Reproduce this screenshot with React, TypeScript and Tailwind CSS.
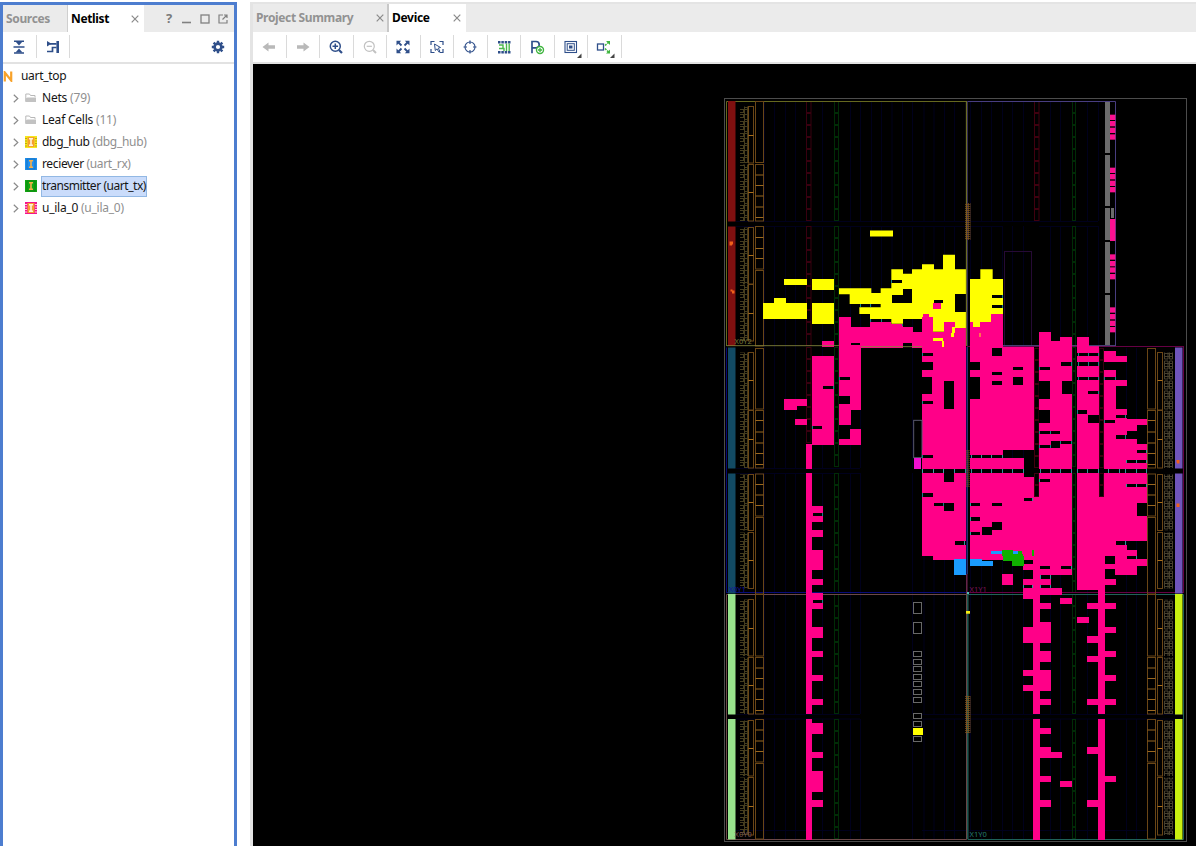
import React from "react";

type Box = [number, number, number, number];

const PINK = "#ff0088";
const YELLOW = "#ffff00";
const NAVY = "#2f4f8a";

/* Boxes are [left, top, right, bottom] in third-of-a-pixel units inside a tile. */
function Boxes({ list, fill }: { list: Box[]; fill: string }) {
  return (
    <g fill={fill} shapeRendering="crispEdges">
      {list.map((b, i) => (
        <rect key={i} x={b[0]} y={b[1]} width={b[2] - b[0]} height={b[3] - b[1]} />
      ))}
    </g>
  );
}

function Frames({ list, stroke }: { list: Box[]; stroke: string }) {
  return (
    <>
      {list.map((b, i) => (
        <rect key={i} x={b[0]} y={b[1]} width={b[2] - b[0]} height={b[3] - b[1]} fill="none" stroke={stroke} strokeWidth={1} />
      ))}
    </>
  );
}

function Tile({ x, y, children }: { x: number; y: number; children: React.ReactNode }) {
  return <g transform={`translate(${x} ${y}) scale(0.333333)`}>{children}</g>;
}

const edges = (boxes: Box[]): Box[] => boxes.map(([, y1, x2, y2]) => [x2 - 2, y1, x2 + 1, y2]);

const y5: Box[] = [[192, 56, 260, 76], [275, 56, 342, 90], [162, 114, 198, 130], [130, 128, 260, 177], [275, 128, 342, 191]];
const h5y: Box[] = [[516, 61, 546, 70], [549, 88, 576, 128], [516, 104, 576, 128], [642, 119, 669, 128], [705, 103, 738, 157]];
const p5: Box[] = [
  [639, 128, 663, 147], [357, 172, 393, 496], [393, 200, 450, 263], [450, 187, 514, 263], [514, 191, 549, 263],
  [549, 200, 580, 248], [576, 215, 606, 263], [393, 256, 423, 450], [389, 507, 423, 555], [357, 538, 423, 555],
  [306, 243, 342, 262], [275, 288, 342, 555], [192, 418, 260, 437], [192, 418, 230, 450], [225, 477, 260, 496],
  [258, 552, 276, 602], [606, 172, 638, 602], [610, 163, 627, 174], [638, 215, 673, 602], [672, 187, 705, 602], [705, 205, 738, 602],
];
const h5: Box[] = [
  [393, 248, 420, 256], [359, 350, 389, 359], [357, 407, 389, 432], [310, 379, 340, 388], [275, 498, 306, 507],
  [606, 278, 638, 287], [606, 306, 638, 330], [606, 350, 636, 402], [673, 364, 701, 446], [606, 423, 638, 432], [606, 585, 638, 594],
];
const c5: Box[] = [
  [514, 61, 517, 70], [419, 132, 422, 142], [450, 132, 453, 142], [450, 177, 453, 186], [482, 177, 485, 186], [545, 191, 548, 199],
  [358, 350, 361, 359], [339, 379, 342, 388], [275, 498, 278, 507], [606, 278, 609, 287], [606, 423, 609, 432], [606, 585, 609, 594],
];
const p6: Box[] = [
  [60, 187, 124, 260], [123, 163, 159, 262], [60, 260, 252, 570], [60, 568, 159, 584], [60, 594, 222, 602],
  [267, 215, 303, 602], [303, 243, 330, 602], [330, 230, 366, 602], [381, 230, 417, 602], [417, 259, 447, 602],
  [461, 273, 498, 306], [498, 287, 530, 306], [461, 330, 498, 602], [498, 359, 530, 379], [498, 447, 530, 602], [530, 477, 592, 602],
];
const h6: Box[] = [
  [127, 263, 155, 287], [60, 306, 91, 330], [127, 336, 155, 345], [190, 322, 218, 330], [190, 350, 218, 374], [127, 364, 155, 374],
  [60, 350, 91, 417], [267, 322, 299, 330], [334, 306, 366, 317], [267, 364, 299, 417], [336, 364, 366, 402], [267, 450, 299, 489],
  [267, 513, 330, 521], [303, 542, 366, 551], [303, 551, 330, 565], [267, 556, 303, 565], [381, 278, 447, 287], [381, 306, 447, 317],
  [381, 350, 447, 359], [415, 394, 447, 402], [381, 450, 411, 461], [415, 465, 447, 489], [461, 350, 498, 359], [498, 465, 530, 475],
  [461, 481, 494, 489], [561, 496, 592, 552], [530, 513, 561, 537], [498, 526, 530, 537], [561, 570, 592, 580],
];
const c6: Box[] = [
  [156, 105, 159, 114], [156, 134, 159, 143], [268, 322, 271, 330], [362, 306, 365, 317], [300, 513, 303, 521], [268, 513, 271, 521],
  [331, 542, 334, 551], [362, 542, 365, 551], [268, 556, 271, 565], [300, 556, 303, 565], [383, 278, 386, 287], [413, 278, 416, 287],
  [444, 278, 447, 287], [383, 306, 386, 317], [413, 306, 416, 317], [444, 306, 447, 317], [383, 350, 386, 359], [413, 350, 416, 359],
  [444, 350, 447, 359], [444, 394, 447, 402], [382, 450, 385, 461], [463, 350, 466, 359], [494, 350, 497, 359], [526, 465, 529, 475],
  [463, 481, 466, 489], [526, 526, 529, 537], [588, 570, 591, 580], [62, 584, 65, 594], [93, 584, 96, 594], [124, 584, 127, 594], [155, 584, 158, 594],
];
const p7: Box[] = [
  [606, 0, 738, 58], [606, 68, 638, 318], [638, 68, 738, 331], [258, -3, 276, 56], [258, 68, 276, 602], [276, 168, 310, 215],
  [276, 240, 310, 260], [276, 300, 310, 361], [276, 387, 310, 404], [276, 430, 310, 476], [276, 531, 310, 563],
];
const h7: Box[] = [
  [606, 14, 638, 24], [673, 68, 701, 96], [606, 130, 638, 140], [642, 159, 673, 168], [673, 159, 701, 184], [705, 274, 738, 284],
  [278, 189, 310, 197], [278, 449, 310, 458],
];
const p8: Box[] = [
  [60, 0, 159, 14], [60, 24, 222, 58], [60, 68, 222, 331], [222, 81, 253, 347], [252, 141, 267, 376], [267, 0, 366, 58],
  [267, 68, 366, 376], [218, 343, 252, 361], [249, 343, 270, 602], [218, 386, 303, 404], [218, 415, 335, 435], [218, 415, 252, 447],
  [252, 459, 303, 477], [218, 531, 303, 578], [270, 516, 303, 533], [330, 444, 366, 462], [155, 372, 190, 404], [381, 0, 447, 58],
  [381, 68, 447, 419], [446, 141, 465, 419], [444, 400, 465, 602], [461, 0, 592, 58], [461, 68, 592, 273], [461, 272, 498, 376],
  [497, 284, 530, 376], [529, 300, 561, 376], [561, 328, 592, 347], [461, 386, 498, 404], [411, 459, 498, 477], [411, 559, 447, 578],
  [465, 531, 498, 549], [381, 502, 416, 520],
];
const h8: Box[] = [
  [222, 144, 249, 153], [60, 159, 91, 168], [127, 159, 155, 168], [60, 202, 91, 212], [127, 217, 155, 240], [96, 232, 127, 256],
  [60, 246, 91, 256], [267, 87, 299, 96], [270, 347, 299, 356], [334, 347, 366, 356], [222, 331, 249, 343], [466, 317, 494, 343],
  [466, 356, 494, 376], [530, 101, 592, 110], [561, 159, 592, 198], [530, 30, 592, 38], [561, 0, 592, 9], [530, 318, 561, 327],
];
const c8: Box[] = [
  ...[13, 44, 62, 93, 124, 155, 187, 218, 269, 300, 331, 362, 382, 412, 443, 475, 506, 526, 557, 588].map((x): Box => [x, 58, x + 3, 68]),
  ...[62, 93, 124, 155].map((x): Box => [x, 14, x + 3, 24]),
  [247, 144, 250, 153], [60, 159, 63, 168], [60, 202, 63, 212], [60, 246, 63, 256], [42, 274, 45, 284], [268, 87, 271, 96],
  [362, 347, 365, 356], [527, 30, 530, 38], [557, 30, 560, 38], [588, 30, 591, 38], [527, 101, 530, 110], [557, 101, 560, 110],
  [588, 101, 591, 110], [526, 274, 529, 284], [557, 318, 560, 327], [269, 376, 272, 386], [299, 376, 302, 386], [218, 404, 221, 414],
  [247, 404, 250, 414], [269, 404, 272, 414], [299, 404, 302, 414], [588, 0, 591, 8],
];
const p9: Box[] = [
  [258, 0, 276, 205], [258, 219, 276, 581], [276, 14, 310, 34], [276, 87, 310, 105], [276, 159, 310, 178], [276, 231, 310, 265],
  [276, 319, 310, 337], [276, 376, 310, 438], [276, 463, 310, 482],
];
const p10: Box[] = [
  [250, 0, 270, 205], [250, 219, 270, 581], [444, 0, 465, 205], [444, 219, 465, 581], [270, 14, 303, 47], [218, 72, 303, 90],
  [270, 88, 303, 134], [218, 116, 270, 134], [270, 159, 303, 178], [270, 246, 303, 265], [270, 304, 303, 337], [303, 318, 335, 337],
  [270, 391, 303, 409], [330, 405, 366, 424], [270, 463, 303, 482], [411, 30, 447, 47], [465, 14, 498, 34], [465, 87, 498, 105],
  [411, 159, 498, 178], [411, 304, 447, 323], [465, 391, 498, 409], [411, 463, 447, 482],
];

/* Vertical extents of the six clock-region halves. */
const halves: [number, number][] = [[101, 221.5], [226.5, 346], [347.5, 468.5], [473.5, 593.5], [594, 714.5], [719, 839.5]];
const barsLeft = ["#7f1010", "#7f1010", "#124a64", "#124a64", "#98e28c", "#98e28c"];
const barsRight = ["", "", "#6f55bb", "#6f55bb", "#c8f010", "#c8f010"];
const bankRows: [number, number, number][] = [
  [106.5, 163, 135.5], [164.5, 221, 192.5], [227.5, 284, 255.5], [284.5, 341, 313.5], [352.5, 410, 380.5], [410.5, 468, 439.5],
  [474.5, 530.5, 502.5], [532.5, 588.5, 560.5], [599.5, 656, 628.5], [657.5, 714, 685.5], [720.5, 776, 748.5], [777.5, 835, 806.5],
];
const ioRows: [number, number, number[]][] = [
  [101.5, 162.5, []], [164.5, 221, [175, 185.5, 196, 207, 217.5]], [226.5, 269, [237.5, 248.5, 258.5]], [270.5, 346, []],
  [348.5, 409, []], [410.5, 468, [420.5, 432, 443, 453.5, 464.5]], [474, 516, [484.5, 495, 505.5]], [517.5, 594, []],
  [594.5, 656, []], [657.5, 714, [668, 678.5, 689, 699.5, 710.5]], [719.5, 762, [730, 741, 751.5]], [763.5, 839, []],
];

function Banks({ right }: { right?: boolean }) {
  const from = right ? 347 : 0;
  const bx = right ? 1157.5 : 748.5;
  const cx = right ? 1147.5 : 755.5;
  return (
    <g fill="none" stroke="#6a4616">
      {bankRows.filter((r) => r[0] > from).map(([a, b, m]) => (
        <g key={a}>
          <rect x={bx} y={a} width={5} height={b - a} />
          <path d={`M${bx} ${m}h5`} stroke="#a86f1c" />
        </g>
      ))}
      {ioRows.filter((r) => r[0] > from).map(([a, b, ms]) => (
        <g key={a}>
          <rect x={cx} y={a} width={8} height={b - a} />
          {ms.map((m) => <path key={m} d={`M${cx} ${m}h8`} stroke="#9a6820" />)}
        </g>
      ))}
      {bankRows.filter((r) => r[0] > from).map(([a, b]) => (
        <rect key={`t${a}`} x={right ? 1164 : 740} y={a} width={right ? 9 : 8} height={b - a} fill={right ? "url(#padsR)" : "url(#padsL)"} stroke="none" />
      ))}
    </g>
  );
}

function Ladder({ x, w, color, list }: { x: number; w: number; color: string; list: [number, number][] }) {
  return (
    <g fill="none" stroke={color}>
      {list.map(([a, b]) =>
        Array.from({ length: Math.round((b - a) / 12) }, (_, i) => (
          <rect key={a + i} x={x} y={Math.floor(a) + 0.5 + i * 12} width={w} height={11} />
        ))
      )}
    </g>
  );
}

function DeviceMap() {
  const gridL = [764.5, 774.5, 785.5, 795.5, 822.5, 850.5, 860.5];
  const gridM = [871.5, 881.5, 892, 902.5];
  const gridR = [912.5, 924, 934, 944.5, 954.5, 970.5, 981.5, 991.5, 1002.5, 1012.5, 1023.5, 1050.5, 1060.5, 1087.5, 1098.5];
  return (
    <svg className="block h-[782px] w-[943px] shrink-0 bg-black" viewBox="253 64 943 782">
      <defs>
        <pattern id="padsL" width="8" height="12" patternUnits="userSpaceOnUse">
          <path d="M.5 0V12M3.500 0V12M0 1.500H8M3 4.500H8M0 6.500H8M3 9.500H8M0 11.500H4M7.500 1V5M7.500 6V10" stroke="#453d1e" strokeWidth="1" fill="none" />
        </pattern>
        <pattern id="padsR" width="9" height="10" x="1164" patternUnits="userSpaceOnUse">
          <path d="M.5 1V9H4V1ZM5.500 1V9H8.500V1ZM0 3.500H9M0 6.500H9" stroke="#48412e" strokeWidth="1" fill="none" />
        </pattern>
        <pattern id="mesh" width="2" height="2" patternUnits="userSpaceOnUse">
          <path d="M0 .5H2M.5 0V2" stroke="#80561e" strokeWidth=".7" />
        </pattern>
      </defs>

      <g stroke="#00001c">
        {gridL.map((x) => <path key={x} d={`M${x} 101V221M${x} 226V468M${x} 473V714M${x} 719V839`} />)}
        {gridM.map((x) => <path key={x} d={`M${x} 101V221M${x} 226V346`} />)}
        {gridR.map((x) => <path key={x} d={`M${x} 101V221M${x} 226V468M${x} 473V714M${x} 719V839`} />)}
        <path d="M1126.500 348V468M1126.500 473V714M1126.500 719V839M1136.500 348V468M1136.500 473V714M1136.500 719V839" />
        <path d="M736 221.500H1098M736 226.500H1003M1039 226.500H1098M736 468.500H860M736 473.500H860M736 714.500H860M736 719H860M922 714.500H1183M922 719H1183M736 830.500H860M922 830.500H1147" />
      </g>
      <rect x="1004.500" y="251.500" width="27" height="95" fill="none" stroke="#260a35" />

      <Ladder x={806.5} w={4.5} color="#38000f" list={[[101, 221], [226, 346], [347, 445]]} />
      <Ladder x={1034.5} w={4.5} color="#40000f" list={[[101, 221], [348, 468], [473, 497]]} />
      <Ladder x={1099.5} w={4} color="#38000f" list={[[348, 468], [473, 497]]} />
      <Ladder x={834.5} w={4} color="#002c06" list={halves} />
      <Ladder x={1072.5} w={3} color="#002c06" list={halves} />

      <g fill="none" strokeWidth="1">
        <rect x="724.500" y="98.500" width="462" height="743" stroke="#4c4c4c" />
        <path d="M726.500 346V101.500H966" stroke="#66681f" />
        <path d="M968 101.500H1115.500V346" stroke="#483d80" />
        <path d="M726.500 593V347.500M726 592.500H967" stroke="#080a78" />
        <path d="M967 346.500H1184M1183.500 347V593M1184 592.500H967" stroke="#660044" />
        <path d="M726.500 839.500V594.500H966.500V839.500Z" stroke="#6c4848" />
        <path d="M968 594.500H1183.500V839.500H968Z" stroke="#1f6258" />
      </g>

      {halves.map(([a, b], i) => (
        <g key={a}>
          <rect x="728" y={a} width="7.500" height={b - a} fill={barsLeft[i]} />
          {barsRight[i] && <rect x="1175" y={a} width="7.500" height={b - a} fill={barsRight[i]} />}
        </g>
      ))}
      <Banks />
      <Banks right />

      <Tile x={950} y={92}>
        <Boxes fill="#6b6b6b" list={[[466, 29, 480, 183], [466, 190, 480, 342], [466, 347, 480, 444], [466, 451, 480, 602], [466, 610, 480, 760], [482, 348, 492, 378]]} />
        <g fill="#fb1090">
          {[68, 87, 107, 127, 227, 246, 266, 285, 487, 507, 526, 546, 646, 666, 686, 705].map((y) => (
            <rect key={y} x="480" y={y} width="16" height="16" />
          ))}
          <rect x="480" y="381" width="16" height="66" />
        </g>
      </Tile>

      <rect x="870" y="230.500" width="23" height="6" fill={YELLOW} />
      <Tile x={720} y={260}>
        <Boxes list={y5} fill={YELLOW} />
        <path
          fill={YELLOW}
          d="M357 85H454V99H482V85H514V28H549V41H576V28H606V13H642V28H669V-16H705V28H738V215H606V177H549V191H514V177H450V162H418V142H482V132H389V103H357Z"
        />
        <Boxes list={h5y} fill="#000" />
        <Boxes list={p5} fill={PINK} />
        <Boxes list={h5} fill="#000" />
        <Boxes list={c5} fill="#168088" />
        <Boxes list={[[638, 234, 669, 243], [665, 243, 673, 262], [696, 200, 705, 220], [692, 220, 701, 230]]} fill={YELLOW} />
        <rect x="581" y="481" width="25" height="112" fill="none" stroke="#58586c" strokeWidth="3" />
        <path d="M20 257H357M423 260H606" stroke="#85863c" strokeOpacity=".85" strokeWidth="3" />
      </Tile>
      <Tile x={950} y={260}>
        <path fill={YELLOW} d="M60 57H91V28H128V57H159V190H60Z" />
        <Boxes list={[[127, 105, 156, 114], [127, 134, 156, 143]]} fill="#000" />
        <Boxes list={p6} fill={PINK} />
        <Boxes list={h6} fill="#000" />
        <Boxes list={c6} fill="#168088" />
        <Boxes list={[[70, 186, 91, 200]]} fill={YELLOW} />
        <Boxes list={[[87, 220, 93, 230]]} fill="#ff7050" />
        <path d="M159 257H267M366 257H381M417 257H496" stroke="#554a86" strokeWidth="3" />
      </Tile>
      <Tile x={720} y={450}>
        <Boxes list={p7} fill={PINK} />
        <Boxes list={h7} fill="#000" />
        <Boxes list={edges([[278, 189, 308, 197], [278, 449, 308, 458], [640, 159, 672, 168]])} fill="#168088" />
        <Boxes list={[606, 638, 669, 701].map((x): Box => [x, 58, x + 3, 68])} fill="#40a0a8" />
        <Boxes list={[[606, 14, 609, 24], [606, 130, 609, 140]]} fill="#168088" />
        <Boxes list={[[582, 23, 603, 56]]} fill="#f010d0" />
        <Boxes list={[[701, 328, 738, 376]]} fill="#1a9cff" />
      </Tile>
      <Tile x={950} y={450}>
        <Boxes list={p8} fill={PINK} />
        <Boxes list={h8} fill="#000" />
        <Boxes list={c8} fill="#30949c" />
        <Boxes list={[[60, 328, 96, 347], [94, 333, 128, 347], [123, 304, 155, 312], [190, 304, 203, 312]]} fill="#1a9cff" />
        <Boxes list={[[155, 300, 190, 318], [159, 317, 222, 332], [186, 331, 222, 347], [186, 313, 218, 320], [203, 304, 216, 318], [246, 300, 252, 317]]} fill="#10b000" />
      </Tile>
      <Tile x={720} y={646}>
        <Boxes list={p9} fill={PINK} />
        <Boxes list={[[579, 246, 608, 267]]} fill={YELLOW} />
      </Tile>
      <Tile x={950} y={646}>
        <Boxes list={p10} fill={PINK} />
      </Tile>
      <Frames
        stroke="#686868"
        list={[
          [913.5, 602.5, 921.5, 613.5], [913.5, 622.5, 921.5, 633.5], [913.5, 651.5, 921.5, 656.5], [913.5, 659.5, 921.5, 664.5],
          [913.5, 666.5, 921.5, 671.5], [913.5, 674.5, 921.5, 679.5], [913.5, 681.5, 921.5, 686.5], [913.5, 689.5, 921.5, 694.5],
          [913.5, 697.5, 921.5, 702.5], [913.5, 713.5, 921.5, 718.5], [913.5, 721.5, 921.5, 726.5], [913.5, 736.5, 921.5, 741.5],
        ]}
      />

      <path d="M966.500 101V346" stroke="#6b6c25" strokeWidth="1.300" />
      <path d="M967.500 101V346" stroke="#403672" strokeWidth=".7" />
      <path d="M966.500 347V574" stroke="#101050" />
      <path d="M967.500 347V574" stroke="#25356a" />
      <path d="M966.800 574V594" stroke="#702850" strokeWidth="1.400" />
      <path d="M966.500 594V839" stroke="#674646" />
      <path d="M967.500 594V839" stroke="#1f5850" />
      <rect x="965" y="203" width="5.500" height="37" fill="url(#mesh)" />
      <rect x="966" y="450" width="4" height="37" fill="url(#mesh)" opacity=".6" />
      <rect x="965" y="696" width="5.500" height="37" fill="url(#mesh)" />
      <rect x="966" y="611" width="4" height="2.700" fill="#f5ec10" />
      <rect x="967" y="592" width="2" height="2" fill="#50c0b0" />
      <g fill="#f0601a">
        <path d="M729.500 241.500h3.500v3h-1v1h-2.500zM730.500 289.500h2v1h2v3h-2.500v-2h-1.500zM1176.500 460h3v3.500h-2.500v-1h-.5zM1176.500 503.500h3v3.500h-3z" />
      </g>
      <g className="font-['Noto_Sans']" fontSize="7.500">
        <text x="734.500" y="344" fill="#77783a">X0Y2</text>
        <text x="728.500" y="592" fill="#1212a0">X0Y1</text>
        <text x="734.500" y="837" fill="#7a5555">X0Y0</text>
        <text x="969.500" y="592" fill="#7c1456">X1Y1</text>
        <text x="969.500" y="837" fill="#267a6e">X1Y0</text>
      </g>
    </svg>
  );
}

function Ico({ children, size = 16 }: { children: React.ReactNode; size?: number }) {
  return (
    <svg width={size} height={size} viewBox="0 0 16 16" fill="none" stroke={NAVY} strokeWidth="1.500" className="shrink-0">
      {children}
    </svg>
  );
}

function Close() {
  return (
    <svg width="8" height="8" viewBox="0 0 8 8" className="shrink-0">
      <path d="M.7.7l6.600 6.600M7.300.7l-6.600 6.600" stroke="#8a8a8a" strokeWidth="1.200" />
    </svg>
  );
}

const corner = <path d="M18.500 14.500V19H14Z" fill="#444" stroke="none" />;

const deviceTools: React.ReactNode[] = [
  <path d="M1.500 8 7.500 3.500V6.300H14V9.700H7.500V12.500Z" fill="#b9b9b9" stroke="none" />,
  <path d="M14.500 8 8.500 3.500V6.300H2V9.700H8.500V12.500Z" fill="#b9b9b9" stroke="none" />,
  <><circle cx="7.300" cy="7.300" r="5" /><path d="M4.500 7.300h5.600M7.300 4.500v5.600" /><path d="M11 11l3 3" strokeWidth="2.200" /></>,
  <><g stroke="#c2c2c2"><circle cx="7.300" cy="7.300" r="5" strokeWidth="1.200" /><path d="M4.700 7.300h5.200" strokeWidth="1.200" /><path d="M11 11l3 3" strokeWidth="2" /></g></>,
  <><path d="M3 3l3.500 3.500M13 3L9.500 6.500M3 13l3.500-3.500M13 13l-3.500-3.500" strokeWidth="1.800" /><path d="M1.500 1.700h4.700L1.500 6.400ZM14.500 1.700H9.800L14.500 6.400ZM1.500 14.300h4.700L1.500 9.600ZM14.500 14.300H9.800L14.500 9.600Z" fill={NAVY} stroke="none" /></>,
  <><path d="M2 6V2.500H5.500M10.500 2.500h3.500V6M14 10v3.500H10.500M5.500 13.500H2V10" strokeWidth="1.200" /><path d="M5.500 5l6 3.500-2.400.7 1.900 3-1.200.7-1.800-3L6.300 11.500Z" strokeWidth="1" /></>,
  <><circle cx="8" cy="8" r="5" strokeWidth="1.100" /><path d="M8 1.500V5M8 11v3.500M1.500 8H5M11 8h3.500" strokeWidth="1.200" /></>,
  <>
    <path d="M2 3.200h12.500M2 13.300h12.500" strokeWidth="2.600" strokeDasharray="2.500 .85" />
    <path d="M3 6h4v3.500M3 9.500h5V12M10.500 4.500V12M13.200 4.500V12" stroke="#4cb84c" strokeWidth="1.400" />
  </>,
  <><path d="M3 14.200V2.500H7a3.200 3.200 0 010 6.400H3" strokeWidth="1.700" /><circle cx="11" cy="11" r="3.500" stroke="#3fb53f" strokeWidth="1.400" fill="#fff" /><path d="M9 11h4M11 9v4" stroke="#3fb53f" strokeWidth="1.300" /></>,
  <><rect x="2" y="2.500" width="11.500" height="11" strokeWidth="1.100" /><rect x="4.200" y="4.700" width="7.100" height="6.600" strokeWidth="1" /><rect x="6" y="6.500" width="3.500" height="3" fill={NAVY} stroke="none" />{corner}</>,
  <><rect x="1.500" y="5" width="6" height="6" strokeWidth="1.300" /><path d="M9 6.500L13 3M9 9.500L13 13.500" stroke="#3fb53f" strokeDasharray="2 1" /><path d="M10 2h4v4ZM10 14.500h4v-4Z" fill="#3fb53f" stroke="none" />{corner}</>,
];

type Row = { name: string; note: string; kind: "folder" | "cell"; spacing: string; color?: string; selected?: boolean };
const rows: Row[] = [
  { name: "Nets", note: "(79)", kind: "folder", spacing: "tracking-[-0.2px]" },
  { name: "Leaf Cells", note: "(11)", kind: "folder", spacing: "tracking-[-0.22px]" },
  { name: "dbg_hub", note: "(dbg_hub)", kind: "cell", spacing: "tracking-[-0.3px]", color: "#f7e81a" },
  { name: "reciever", note: "(uart_rx)", kind: "cell", spacing: "tracking-[-0.36px]", color: "#1f90f0" },
  { name: "transmitter", note: "(uart_tx)", kind: "cell", spacing: "tracking-[-0.45px]", color: "#12a812", selected: true },
  { name: "u_ila_0", note: "(u_ila_0)", kind: "cell", spacing: "tracking-[-0.25px]", color: "#f5148c" },
];

function RowIcon({ row }: { row: Row }) {
  if (row.kind === "folder") {
    return (
      <svg width="12" height="12" viewBox="0 0 12 12" className="shrink-0">
        <path d="M.8 9.500V2H4.500l1 1.500h4.500V5" fill="none" stroke="#b8b8b8" />
        <path d="M.5 10V6.500L2.500 5.500H11V10Z" fill="#c2c2c2" />
      </svg>
    );
  }
  const yellow = row.name === "dbg_hub";
  const striped = yellow || row.name === "u_ila_0";
  return (
    <svg width="12" height="12" viewBox="0 0 12 12" className="shrink-0">
      <rect width="12" height="12" fill={row.color} />
      {striped && <path d="M0 2.500h2M0 5h2M0 7.500h2M0 10h2M10 2.500h2M10 5h2M10 7.500h2M10 10h2" stroke={yellow ? "#a89a10" : "#fff"} strokeWidth=".8" />}
      {striped && <rect x="2.500" y="1" width="7" height="10" fill="#f5a030" />}
      {!striped && <rect x="2" y="1" width="8" height="10" fill="none" stroke="#000" strokeOpacity=".25" strokeWidth=".8" />}
      <path d="M4 2.800H8M6 3V9M4 9.200H8" stroke={striped ? "#fff3dc" : "#f7b04a"} strokeWidth="1.600" fill="none" />
    </svg>
  );
}

function NetlistPanel() {
  return (
    <section className="mt-[2px] flex h-[844px] w-[237px] shrink-0 flex-col border-x-[3px] border-t-[3px] border-[#4d7dcf] bg-white">
      <div className="flex h-[27px] shrink-0 items-center bg-[#ebebeb] text-[12px] font-bold">
        <div className="flex h-full w-[65px] items-center border-r border-[#cfcfcf] pl-[3px] text-[#929292]">
          <span className="tracking-[-0.35px]">Sources</span>
        </div>
        <div className="flex h-full w-[76px] items-center justify-between bg-white pl-[3px] pr-[5px] text-black">
          <span className="tracking-[-0.35px]">Netlist</span>
          <Close />
        </div>
        <div className="ml-auto flex items-center gap-[8px] pr-[6px] text-[#7b7b7b]">
          <span className="w-[10px] text-center text-[13px]">?</span>
          <svg width="10" height="10" viewBox="0 0 10 10"><path d="M0 8.500H9" stroke="#808080" strokeWidth="1.600" /></svg>
          <svg width="10" height="10" viewBox="0 0 10 10"><rect x="1" y="1" width="8" height="8" fill="none" stroke="#808080" strokeWidth="1.300" /></svg>
          <svg width="10" height="10" viewBox="0 0 10 10"><path d="M5 1H1V9H9V6M6 1H9V4M9 1L4.500 5.500" fill="none" stroke="#808080" strokeWidth="1.200" /></svg>
        </div>
      </div>
      <div className="flex h-[32px] shrink-0 items-center border-b-2 border-[#e2e2e2] pb-px">
        <div className="flex h-[23px] w-[33.5px] items-center justify-center border-r border-[#dadada]">
          <Ico><path d="M3 2.200H13M3 14H13M2.500 8H13.500" strokeWidth="1.500" /><path d="M4.500 2.500H11.500L8 6.500ZM4.500 13.500H11.500L8 9.500Z" fill={NAVY} stroke="none" /></Ico>
        </div>
        <div className="flex h-[23px] w-[33.5px] items-center justify-center border-r border-[#dadada]">
          <Ico><path d="M2 2 6.500 4.700 2 7.500Z" fill={NAVY} stroke="none" /><path d="M12.700 2V14" strokeWidth="2.600" /><path d="M5 4.800H11.500M11.500 8.500H7.500V12.500H2" strokeWidth="1.700" /></Ico>
        </div>
        <div className="ml-auto pr-[8px]">
          <Ico><circle cx="8" cy="8" r="3.400" strokeWidth="2.600" /><path d="M8 1.800V4M8 12v2.200M1.800 8H4M12 8h2.200M3.600 3.600l1.600 1.600M10.800 10.800l1.600 1.600M12.400 3.600l-1.600 1.600M5.200 10.800l-1.600 1.600" strokeWidth="2.400" /></Ico>
        </div>
      </div>
      <div className="flex flex-col pt-[1px] text-[12px] text-[#151515]">
        <div className="flex h-[22px] items-center">
          <svg width="11" height="11" viewBox="0 0 11 11" className="mr-[6.500px] shrink-0"><path d="M1.800 10.500V1.500L8.200 9.500V.5" fill="none" stroke="#f8a22a" strokeWidth="2.200" /></svg>
          <span className="ml-[0.5px] tracking-[-0.3px]">uart_top</span>
        </div>
        {rows.map((r) => (
          <div key={r.name} className="flex h-[22px] items-center">
            <svg width="6" height="9" viewBox="0 0 6 9" className="ml-[9.5px] shrink-0"><path d="M.8.7 4.800 4.500.8 8.300" fill="none" stroke="#8a8a8a" strokeWidth="1.200" /></svg>
            <span className="ml-[6px] flex w-[12px]"><RowIcon row={r} /></span>
            <span
              className={
                (r.selected
                  ? "ml-[4.5px] flex h-[21px] items-center whitespace-pre border border-[#92b8e4] bg-[#cadcfb] "
                  : "ml-[4.5px] flex h-[21px] items-center whitespace-pre border border-transparent ") + r.spacing
              }
            >
              {r.name + " "}
              <span className={r.selected ? "" : "text-[#8f8f8f]"}>{r.note}</span>
            </span>
          </div>
        ))}
      </div>
    </section>
  );
}

export default function App() {
  return (
    <main className="flex h-[846px] w-[1196px] overflow-hidden bg-white font-['Noto_Sans',sans-serif]">
      <NetlistPanel />
      <section className="ml-[13px] mt-[2px] flex h-[844px] w-[946px] shrink-0 flex-col border-l-[3px] border-t-2 border-[#e4e4e4]">
        <div className="flex h-[28px] shrink-0 items-center bg-[#ebebeb] text-[12px] font-bold">
          <div className="flex h-full w-[136px] items-center justify-between border-r-2 border-[#c8c8c8] pl-[3px] pr-[3px] text-[#929292]">
            <span className="tracking-[-0.35px]">Project Summary</span>
            <Close />
          </div>
          <div className="flex h-full w-[77px] items-center justify-between bg-white pl-[3px] pr-[5px] text-black">
            <span className="tracking-[-0.3px]">Device</span>
            <Close />
          </div>
        </div>
        <div className="flex h-[32px] shrink-0 items-center border-b-2 border-[#e2e2e2] bg-white pb-px">
          {deviceTools.map((icon, i) => (
            <div key={i} className="flex h-[23px] w-[33.5px] shrink-0 items-center justify-center border-r border-[#dadada]">
              <svg width="16" height="16" viewBox="0 0 16 16" fill="none" stroke={NAVY} strokeWidth="1.500" className="overflow-visible">{icon}</svg>
            </div>
          ))}
        </div>
        <DeviceMap />
      </section>
    </main>
  );
}
